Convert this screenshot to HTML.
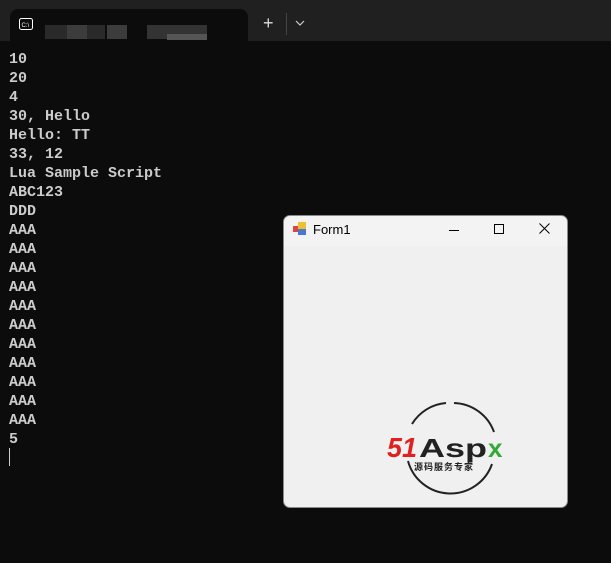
<!DOCTYPE html>
<html><head><meta charset="utf-8"><style>
html,body{margin:0;padding:0;width:611px;height:563px;overflow:hidden;background:#0c0c0c;}
.strip{position:absolute;left:0;top:0;width:611px;height:41px;background:#202020;}
.tab{position:absolute;left:10px;top:9px;width:238px;height:32px;background:#0c0c0c;border-radius:8px 8px 0 0;}
.blur{position:absolute;top:16px;height:14px;background:#3a3a3a;}
pre{position:absolute;left:9px;top:50px;margin:0;font:bold 15px/19px "Liberation Mono",monospace;color:#cccccc;}
.cur{position:absolute;left:9px;top:448px;width:1px;height:18px;background:#ccc;}
.win{position:absolute;left:283px;top:215px;width:283px;height:291px;background:#f0f0f0;border:1px solid #8a8a8a;border-radius:7px;overflow:hidden;}
.tb{height:30px;background:#f3f3f3;position:relative;font:13px "Liberation Sans",sans-serif;color:#000;}
</style></head><body>
<div class="strip"></div>
<div class="tab">
<svg style="position:absolute;left:9px;top:9px" width="14" height="12"><rect x="0.5" y="0.5" width="13" height="11" rx="2" fill="none" stroke="#fff"/><text x="2.5" y="9" font-size="6" fill="#fff" font-family="Liberation Sans">C:\</text></svg>
<div class="blur" style="left:35px;width:60px;background:#2a2a2a"></div>
<div class="blur" style="left:57px;width:20px;background:#3c3c3c"></div>
<div class="blur" style="left:97px;width:20px;background:#3c3c3c"></div>
<div class="blur" style="left:137px;width:60px;background:#333"></div>
<div class="blur" style="left:157px;top:25px;width:40px;height:6px;background:#555"></div>
</div>
<div style="position:absolute;left:263px;top:13px;color:#ddd;font:18px 'Liberation Sans',sans-serif">+</div>
<div style="position:absolute;left:286px;top:13px;width:1px;height:22px;background:#444"></div>
<svg style="position:absolute;left:295px;top:20px" width="10" height="6"><path d="M1 1L5 5L9 1" fill="none" stroke="#ccc" stroke-width="1.2"/></svg>
<pre>10
20
4
30, Hello
Hello: TT
33, 12
Lua Sample Script
ABC123
DDD
AAA
AAA
AAA
AAA
AAA
AAA
AAA
AAA
AAA
AAA
AAA
5</pre>
<div class="cur"></div>
<div class="win">
<div class="tb">
<svg style="position:absolute;left:9px;top:6px" width="14" height="14"><rect x="0" y="4" width="6" height="6" fill="#d44"/><rect x="5" y="0" width="8" height="7" fill="#f0c030"/><rect x="5" y="7" width="8" height="6" fill="#4a78d0"/></svg>
<span style="position:absolute;left:29px;top:6px">Form1</span>
<div style="position:absolute;left:165px;top:14px;width:10px;height:1px;background:#000"></div>
<div style="position:absolute;left:210px;top:8px;width:8px;height:8px;border:1px solid #000"></div>
<svg style="position:absolute;left:255px;top:7px" width="11" height="11"><path d="M0.5 0.5L10.5 10.5M10.5 0.5L0.5 10.5" stroke="#000" stroke-width="1"/></svg>
</div>
<svg style="position:absolute;left:100px;top:180px" width="140" height="105">
<path d="M70 7 A44 44 0 0 1 110 36" fill="none" stroke="#222" stroke-width="2"/>
<path d="M28 28 A44 44 0 0 1 62 7" fill="none" stroke="#222" stroke-width="2"/>
<path d="M24 65 A44 44 0 0 0 108 68" fill="none" stroke="#222" stroke-width="2"/>
<text x="3" y="61" font-family="Liberation Sans" font-weight="bold" font-style="italic" font-size="28" fill="#e02020" textLength="30" lengthAdjust="spacingAndGlyphs">51</text>
<text x="35" y="61" font-family="Liberation Sans" font-weight="bold" font-size="26" fill="#222" textLength="68" lengthAdjust="spacingAndGlyphs">Asp</text>
<text x="104" y="61" font-family="Liberation Sans" font-weight="bold" font-size="26" fill="#3a3">x</text>
<text x="30" y="74" font-family="Noto Sans CJK SC,sans-serif" font-weight="bold" font-size="9" fill="#222" letter-spacing="1">源码服务专家</text>
</svg>
</div>
</body></html>
